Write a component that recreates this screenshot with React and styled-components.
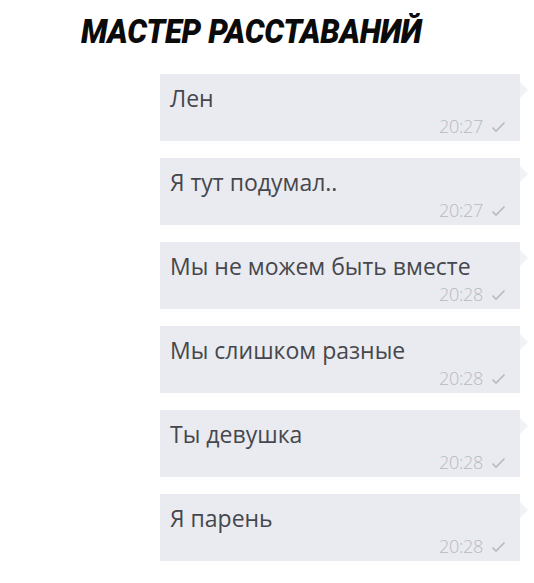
import styled, { createGlobalStyle } from "styled-components";

const Global = createGlobalStyle`
  body {
    margin: 0;
    background: #fff;
  }
`

const Page = styled.div`
  width: 534px;
  height: 583px;
  background: #fff;
  overflow: hidden;
`
const Header = styled.div`
  height: 74px;
  padding: 14px 0 0 81px;
  box-sizing: border-box;
`
const Title = styled.h1`
  display: inline-block;
  margin: 0;
  font-family: Roboto, "Liberation Sans", sans-serif;
  font-weight: 900;
  font-style: italic;
  font-size: 33px;
  line-height: 36px;
  letter-spacing: -0.3px;
  color: #0b0b0b;
  white-space: nowrap;
  transform: scaleX(0.94);
  transform-origin: left center;
`
const Chat = styled.div`
  display: flex;
  flex-direction: column;
  gap: 17px;
  margin-left: 160px;
  width: 360px;
`
const Bubble = styled.div`
  position: relative;
  height: 67px;
  box-sizing: border-box;
  background: #e9ebf0;
  padding: 11px 14px 0 10px;
  display: flex;
  flex-direction: column;

  &::after {
    content: "";
    position: absolute;
    right: -8px;
    top: 8px;
    border-left: 8px solid #f1f2f5;
    border-top: 8px solid transparent;
    border-bottom: 8px solid transparent;
  }
`
const Text = styled.div`
  font-family: "Open Sans", "Noto Sans", sans-serif;
  font-size: 23px;
  line-height: 26px;
  color: #46474c;
`
const Meta = styled.div`
  display: flex;
  justify-content: flex-end;
  align-items: center;
  gap: 8px;
  margin-top: 4px;
  font-family: "Open Sans", "Noto Sans", sans-serif;
  font-weight: 300;
  font-size: 18px;
  line-height: 22px;
  letter-spacing: -0.3px;
  color: #b6bac3;

  svg { margin-top: 1px; }
`

const Check = () => (
  <svg width="15" height="12" viewBox="0 0 15 12">
    <path d="M1.5 6.5 L5 10 L13.5 1.5" fill="none" stroke="#b6bac3" strokeWidth="1.6" />
  </svg>
)

const messages = [
  ["Лен", "20:27"],
  ["Я тут подумал..", "20:27"],
  ["Мы не можем быть вместе", "20:28"],
  ["Мы слишком разные", "20:28"],
  ["Ты девушка", "20:28"],
  ["Я парень", "20:28"],
]

const App = () => {
  return (
    <Page>
      <Global />
      <Header>
        <Title>МАСТЕР РАССТАВАНИЙ</Title>
      </Header>
      <Chat>
        {messages.map(([text, time], i) => (
          <Bubble key={i}>
            <Text>{text}</Text>
            <Meta>{time}<Check /></Meta>
          </Bubble>
        ))}
      </Chat>
    </Page>
  )
}

export default App
